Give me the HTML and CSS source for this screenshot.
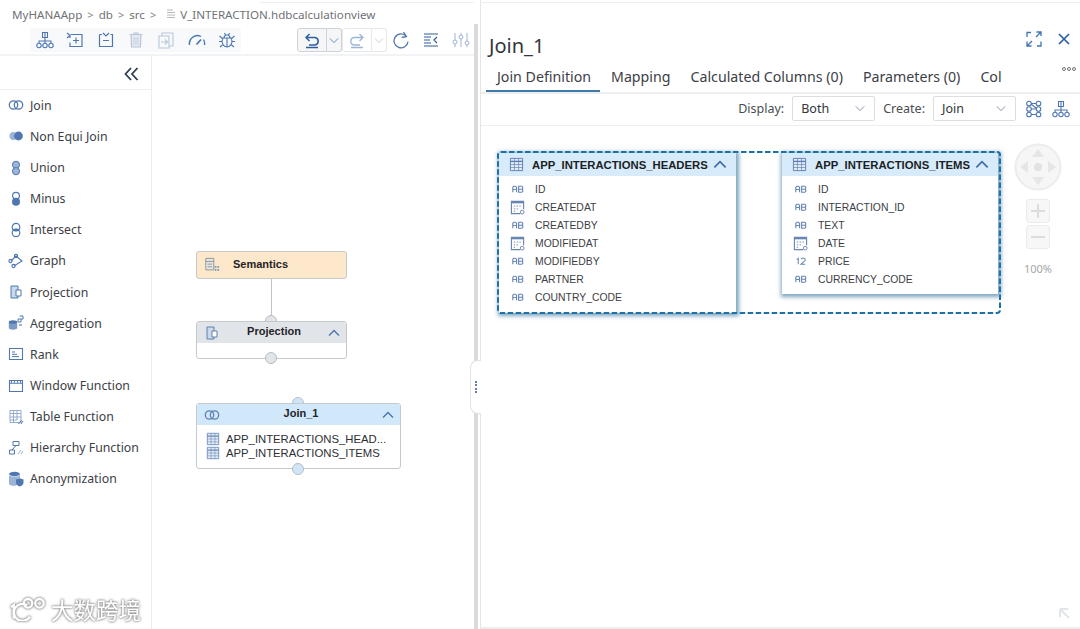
FILE: index.html
```html
<!DOCTYPE html>
<html lang="en">
<head>
<meta charset="utf-8">
<title>V_INTERACTION.hdbcalculationview</title>
<link rel="stylesheet" href="styles.css">
</head>
<body>
<svg class="defs" width="0" height="0" aria-hidden="true">
  <defs>
    <symbol id="i-join" viewBox="0 0 16 16"><g fill="none" stroke="currentColor" stroke-width="1.3"><circle cx="5.5" cy="8" r="4.2"/><circle cx="10.5" cy="8" r="4.2"/></g></symbol>
    <symbol id="i-nonequi" viewBox="0 0 16 16"><circle cx="5.5" cy="8" r="4" fill="#9db4d6"/><circle cx="10.5" cy="8" r="4.4" fill="currentColor"/></symbol>
    <symbol id="i-union" viewBox="0 0 16 16"><circle cx="8" cy="4.8" r="3.6" fill="#9db4d6" stroke="currentColor"/><circle cx="8" cy="11.2" r="3.6" fill="#9db4d6" stroke="currentColor"/></symbol>
    <symbol id="i-minus" viewBox="0 0 16 16"><circle cx="8" cy="4.8" r="3.4" fill="none" stroke="currentColor" stroke-width="1.2"/><circle cx="8" cy="10.8" r="4" fill="currentColor"/></symbol>
    <symbol id="i-intersect" viewBox="0 0 16 16"><g fill="none" stroke="currentColor" stroke-width="1.2"><circle cx="8" cy="5.2" r="3.8"/><circle cx="8" cy="10.8" r="3.8"/></g><path d="M4.8 8h6.4" stroke="currentColor" stroke-width="2.2"/></symbol>
    <symbol id="i-graph" viewBox="0 0 16 16"><g fill="none" stroke="currentColor" stroke-width="1.1"><path d="M3 8 8 3l6 5-8 5"/><circle cx="2.5" cy="8" r="1.6"/><circle cx="8" cy="3" r="1.6"/><circle cx="5.5" cy="13" r="1.6"/></g></symbol>
    <symbol id="i-proj" viewBox="0 0 16 16"><path d="M3 2h7v12H3z" fill="#cbd8ea" stroke="currentColor"/><path d="M8 6h5v6H8z" fill="#fff" stroke="currentColor"/></symbol>
    <symbol id="i-agg" viewBox="0 0 16 16"><ellipse cx="5" cy="7" rx="4.2" ry="1.8" fill="currentColor"/><path d="M.8 7v6c0 2.2 8.4 2.2 8.4 0V7z" fill="currentColor" opacity=".75"/><path d="M10 4h3v3h-3zM11.5 1H15v3h-2" fill="none" stroke="currentColor"/><path d="M11 9h3v2h-3z" fill="#9db4d6"/></symbol>
    <symbol id="i-rank" viewBox="0 0 16 16"><path d="M1.5 2.5h13v11h-13z" fill="none" stroke="currentColor" stroke-width="1.1"/><path d="M4 6h3M4 8.3h5M4 10.6h7" stroke="currentColor"/></symbol>
    <symbol id="i-window" viewBox="0 0 16 16"><path d="M1.5 2.5h13v11h-13zM1.5 5.2h13" fill="none" stroke="currentColor" stroke-width="1.1"/><path d="M3.5 2.5v2.2M6.5 2.5v2.2M9.5 2.5v2.2M12.5 2.5v2.2" stroke="currentColor"/></symbol>
    <symbol id="i-tablefn" viewBox="0 0 16 16"><path d="M2 1.5h11v12H2zM2 4.500h11M2 8h11M2 11h7M5.500 1.500v12M9 1.500V11" fill="none" stroke="#8aa5cb" stroke-width=".9"/><path d="M10.500 15l3-4M13 15l2-3" stroke="currentColor"/></symbol>
    <symbol id="i-hierfn" viewBox="0 0 16 16"><path d="M5 1.500h6v4H5zM1.500 10h5v4h-5zM8 5.500 4 10" fill="none" stroke="currentColor"/><path d="M10 14l3-4M13 14l2-3" stroke="#9db4d6"/></symbol>
    <symbol id="i-anon" viewBox="0 0 16 16"><ellipse cx="6.500" cy="3" rx="5.500" ry="2.200" fill="currentColor"/><path d="M1 4v9c0 2.200 8 2.200 8 1V8l3-1V4c-1 2-10 2-11 0z" fill="#9db4d6"/><path d="M8 8.500l3.800-1.300 3.700 1.300v3c0 2-2 3.500-3.700 4-1.800-.5-3.800-2-3.800-4z" fill="currentColor"/></symbol>
    <symbol id="i-table" viewBox="0 0 16 16"><path d="M1.500 1.500h13v13h-13z" fill="#e4ebf5" stroke="currentColor"/><path d="M1.500 4.700h13" stroke="currentColor" stroke-width="1.500"/><path d="M1.500 8h13M1.500 11.200h13M5.800 1.500v13M10.200 1.500v13" stroke="currentColor" stroke-width=".7"/></symbol>
    <symbol id="i-date" viewBox="0 0 16 17"><path d="M11 15.500H1.500v-13h13V11" fill="none" stroke="currentColor" stroke-width="1.200"/><path d="M1.500 3.500h13" stroke="currentColor" stroke-width="2.200"/><path d="M4 7.500h1.500M7 7.500h1.500M10 7.500h1.500M4 10.500h1.500M7 10.500h1.500M4 13h1.500" stroke="currentColor"/><circle cx="13" cy="14" r="2" fill="#fff" stroke="currentColor"/></symbol>
    <symbol id="i-ab" viewBox="0 0 16 16"><path d="M3 11.500V6.200L4.200 5h1.600L7 6.200v5.300M3 8.500H7M9.200 5h3.400l1 1v1.300l-.8.900.8.900V10.500l-1 1H9.200zM9.200 8.200H12.600" fill="none" stroke="currentColor" stroke-width="1.200"/></symbol>
    <symbol id="i-num" viewBox="0 0 16 16"><path d="M4 6.500l1.600-1.300v6.300M8.500 6l1-1h2.500l1 1v1.300L8.500 11.500H13" fill="none" stroke="currentColor" stroke-width="1.100"/></symbol>
    <symbol id="i-hier" viewBox="0 0 18 18"><g fill="none" stroke="currentColor" stroke-width="1.100"><path d="M6.500 1.500h5v5h-5zM9 1.500v5M9 6.500V10M3 12V10h12v2M9 10v2"/><circle cx="3" cy="14.500" r="2.200"/><circle cx="9" cy="14.500" r="2.200"/><circle cx="15" cy="14.500" r="2.200"/></g></symbol>
    <symbol id="i-add" viewBox="0 0 18 18"><path d="M5 3.500h11v12H4v-4M4 7V3.500M10 6.500v6M7 9.500h6M1 2l3 2.500L1 7" fill="none" stroke="currentColor" stroke-width="1.200"/></symbol>
    <symbol id="i-remove" viewBox="0 0 18 18"><path d="M2.500 3.500v12h13v-12h-2M5 3.500H2.500M6 9.500h6M6 2l3 3 3-3" fill="none" stroke="currentColor" stroke-width="1.200"/></symbol>
    <symbol id="i-trash" viewBox="0 0 18 18"><path d="M2.500 3.500h13M7 3.500V2h4v1.500M4 3.500l.6 12.500h8.800l.6-12.500" fill="#e6ebf3" stroke="currentColor" stroke-width="1.200"/><path d="M7 6v8M11 6v8M9 6v8" stroke="currentColor" stroke-width=".7"/></symbol>
    <symbol id="i-move" viewBox="0 0 18 18"><path d="M5 5V2h11v13h-4M2 5h10v12H2zM4 11h6M8 8.500l2.500 2.500L8 13.500" fill="none" stroke="currentColor" stroke-width="1.100"/></symbol>
    <symbol id="i-gauge" viewBox="0 0 18 18"><path d="M1.500 14A8 8 0 0 1 13 5.500M15.500 8.500a8 8 0 0 1 1 5.500" fill="none" stroke="currentColor" stroke-width="1.400"/><path d="M8.500 13.500 13 8.500" stroke="currentColor" stroke-width="1.800"/></symbol>
    <symbol id="i-bug" viewBox="0 0 18 18"><g fill="none" stroke="currentColor" stroke-width="1.100"><path d="M5 7h8l1 3c0 3-2 6-5 6s-5-3-5-6zM6 7a3 3 0 0 1 6 0M9 7v9M1.500 5 5 8M16.500 5 13 8M1 10.500h3M17 10.500h-3M2 16l3-2.500M16 16l-3-2.500M6.500 2 7.500 4M11.500 2l-1 2"/></g></symbol>
    <symbol id="i-undo" viewBox="0 0 18 18"><path d="M3 6.500h9a3.800 3.800 0 0 1 0 7.500H6M6.500 3 3 6.500 6.500 10M3 16.500h12" fill="none" stroke="currentColor" stroke-width="1.500"/></symbol>
    <symbol id="i-redo" viewBox="0 0 18 18"><path d="M15 6.500H6a3.800 3.800 0 0 0 0 7.500h6M11.500 3 15 6.500 11.500 10M3 16.500h12" fill="none" stroke="currentColor" stroke-width="1.300"/></symbol>
    <symbol id="i-refresh" viewBox="0 0 18 18"><path d="M14.500 5.500a7 7 0 1 0 1.500 5M11.500 1l3 4.500-4.800 1" fill="none" stroke="currentColor" stroke-width="1.300"/></symbol>
    <symbol id="i-layout" viewBox="0 0 18 18"><path d="M2 3h14M2 15h14M2 6h7M2 9h6M2 12h7M15 6l-3 3 3 3" fill="none" stroke="currentColor" stroke-width="1.200"/></symbol>
    <symbol id="i-sliders" viewBox="0 0 18 18"><g fill="none" stroke="currentColor" stroke-width="1"><path d="M3 2v7M3 13v3M9 2v2M9 8v8M15 2v8M15 14v2"/><circle cx="3" cy="11" r="2"/><circle cx="9" cy="6" r="2"/><circle cx="15" cy="12" r="2"/></g></symbol>
    <symbol id="i-chain" viewBox="0 0 18 18"><g fill="none" stroke="currentColor" stroke-width="1.100"><circle cx="4" cy="3.500" r="2.300"/><circle cx="4" cy="9" r="2.300"/><circle cx="4" cy="14.500" r="2.300"/><circle cx="13.500" cy="3.500" r="2.300"/><circle cx="13.500" cy="9" r="2.300"/><circle cx="13.500" cy="14.500" r="2.300"/><path d="M6 3.500h5M6 9h5M6 14.500h5M6 4l5 4"/></g></symbol>
    <symbol id="i-sem" viewBox="0 0 18 18"><path d="M2 1.500h9v13H2zM2 5h9M4 8h5M4 11h5" fill="#e8e6e0" stroke="#8a8f96"/><path d="M12 10h2v2h-2zM15 10h2v2h-2zM12 13.500h2v2h-2zM15 13.500h2v2h-2z" fill="#7f97bb"/></symbol>
    <symbol id="i-chev" viewBox="0 0 12 8"><path d="M1 6.500 6 1.500l5 5" fill="none" stroke="currentColor" stroke-width="1.500"/></symbol>
    <symbol id="i-down" viewBox="0 0 12 8"><path d="M1 1.500 6 6.500l5-5" fill="none" stroke="currentColor" stroke-width="1"/></symbol>
    <symbol id="i-collapse" viewBox="0 0 15 14"><path d="M7 1 1.500 7 7 13M13.500 1 8 7l5.500 6" fill="none" stroke="currentColor" stroke-width="1.800"/></symbol>
  </defs>
</svg>

<div class="app">
  <section class="left">
    <div class="crumb">
      <span>MyHANAApp</span><span class="sep">&gt;</span><span>db</span><span class="sep">&gt;</span><span>src</span><span class="sep">&gt;</span>
      <svg class="doc" viewBox="0 0 10 10"><path d="M1 1h6M1 3.500h8M1 6h8M1 8.500h8" stroke="#b5b8bc" stroke-width="1.200"/></svg>
      <span>V_INTERACTION.hdbcalculationview</span>
    </div>
    <div class="toolbar">
      <div class="tool-group">
        <svg class="ti"><use href="#i-hier"/></svg>
        <svg class="ti"><use href="#i-add"/></svg>
        <svg class="ti"><use href="#i-remove"/></svg>
        <svg class="ti faded"><use href="#i-trash"/></svg>
        <svg class="ti faded"><use href="#i-move"/></svg>
        <svg class="ti"><use href="#i-gauge"/></svg>
        <svg class="ti"><use href="#i-bug"/></svg>
      </div>
      <div class="history">
        <div class="hbtn active wide"><svg class="ti dark"><use href="#i-undo"/></svg></div>
        <div class="hbtn active narrow"><svg class="dn"><use href="#i-down"/></svg></div>
        <div class="hbtn wide"><svg class="ti faded2"><use href="#i-redo"/></svg></div>
        <div class="hbtn narrow"><svg class="dn pale"><use href="#i-down"/></svg></div>
      </div>
      <div class="tool-tail">
        <svg class="ti"><use href="#i-refresh"/></svg>
        <svg class="ti dark"><use href="#i-layout"/></svg>
        <svg class="ti faded2"><use href="#i-sliders"/></svg>
      </div>
    </div>
    <div class="work">
      <aside class="palette">
        <div class="pal-head"><svg class="collapse"><use href="#i-collapse"/></svg></div>
        <ul class="pal-list">
          <li><svg class="pi"><use href="#i-join"/></svg>Join</li>
          <li><svg class="pi"><use href="#i-nonequi"/></svg>Non Equi Join</li>
          <li><svg class="pi"><use href="#i-union"/></svg>Union</li>
          <li><svg class="pi"><use href="#i-minus"/></svg>Minus</li>
          <li><svg class="pi"><use href="#i-intersect"/></svg>Intersect</li>
          <li><svg class="pi"><use href="#i-graph"/></svg>Graph</li>
          <li><svg class="pi"><use href="#i-proj"/></svg>Projection</li>
          <li><svg class="pi"><use href="#i-agg"/></svg>Aggregation</li>
          <li><svg class="pi"><use href="#i-rank"/></svg>Rank</li>
          <li><svg class="pi"><use href="#i-window"/></svg>Window Function</li>
          <li><svg class="pi"><use href="#i-tablefn"/></svg>Table Function</li>
          <li><svg class="pi"><use href="#i-hierfn"/></svg>Hierarchy Function</li>
          <li><svg class="pi"><use href="#i-anon"/></svg>Anonymization</li>
        </ul>
        <div class="mark">
          <svg class="mark-logo" viewBox="0 0 42 24"><g fill="none" stroke="#fff" stroke-width="2.400"><path d="M2 10l3-2v14"/><path d="M19 8a9 9 0 1 0 3 12"/><circle cx="20" cy="6" r="4.500"/><circle cx="32" cy="6" r="4.500"/></g></svg>
          <span class="mark-text">大数跨境</span>
        </div>
      </aside>
      <div class="canvas">
        <div class="link"></div>
        <span class="port p-sem"></span>
        <div class="node n-sem">
          <svg class="ni"><use href="#i-sem"/></svg>
          <b>Semantics</b>
        </div>
        <div class="node n-proj">
          <div class="nhead grey"><svg class="ni"><use href="#i-proj"/></svg><b>Projection</b><svg class="nchev"><use href="#i-chev"/></svg></div>
        </div>
        <span class="port p-proj"></span>
        <span class="port blue p-jtop"></span>
        <div class="node n-join">
          <div class="nhead lblue"><svg class="ni"><use href="#i-join"/></svg><b>Join_1</b><svg class="nchev"><use href="#i-chev"/></svg></div>
          <div class="nrows">
            <div class="nrow"><svg class="nt"><use href="#i-table"/></svg>APP_INTERACTIONS_HEAD...</div>
            <div class="nrow"><svg class="nt"><use href="#i-table"/></svg>APP_INTERACTIONS_ITEMS</div>
          </div>
        </div>
        <span class="port blue p-jbot"></span>
      </div>
    </div>
  </section>

  <div class="split"><div class="bar"></div><div class="grip"><span class="dots"></span></div></div>

  <section class="right">
    <div class="rtop">
      <h1>Join_1</h1>
      <div class="ractions">
        <svg class="expand" viewBox="0 0 16 16"><path d="M1 6V1.500h4M15 5V1h-4.500M15 1l-5 5M1 15l5-5M1 10.500V15h4.500M15 10.500V15h-4" fill="none" stroke="currentColor" stroke-width="1.300"/></svg>
        <svg class="close" viewBox="0 0 12 12"><path d="M1 1l10 10M11 1 1 11" stroke="currentColor" stroke-width="1.700"/></svg>
      </div>
    </div>
    <div class="tabs">
      <span class="tab on">Join Definition</span>
      <span class="tab">Mapping</span>
      <span class="tab">Calculated Columns (0)</span>
      <span class="tab">Parameters (0)</span>
      <span class="tab">Col</span>
      <span class="more"><i></i><i></i><i></i></span>
    </div>
    <div class="filters">
      <label>Display:</label>
      <div class="select"><span>Both</span><svg class="dn"><use href="#i-down"/></svg></div>
      <label>Create:</label>
      <div class="select"><span>Join</span><svg class="dn"><use href="#i-down"/></svg></div>
      <svg class="fi"><use href="#i-chain"/></svg>
      <svg class="fi"><use href="#i-hier"/></svg>
    </div>
    <div class="editor">
      <svg class="selection" viewBox="0 0 504 163"><rect x="1" y="1" width="502" height="161" rx="3"/></svg>
      <div class="tcard t-head">
        <div class="thead"><svg class="tti"><use href="#i-table"/></svg><b>APP_INTERACTIONS_HEADERS</b><svg class="tchev"><use href="#i-chev"/></svg></div>
        <ul class="cols">
          <li><svg class="ci"><use href="#i-ab"/></svg>ID</li>
          <li><svg class="ci"><use href="#i-date"/></svg>CREATEDAT</li>
          <li><svg class="ci"><use href="#i-ab"/></svg>CREATEDBY</li>
          <li><svg class="ci"><use href="#i-date"/></svg>MODIFIEDAT</li>
          <li><svg class="ci"><use href="#i-ab"/></svg>MODIFIEDBY</li>
          <li><svg class="ci"><use href="#i-ab"/></svg>PARTNER</li>
          <li><svg class="ci"><use href="#i-ab"/></svg>COUNTRY_CODE</li>
        </ul>
      </div>
      <div class="tcard t-items">
        <div class="thead"><svg class="tti"><use href="#i-table"/></svg><b>APP_INTERACTIONS_ITEMS</b><svg class="tchev"><use href="#i-chev"/></svg></div>
        <ul class="cols">
          <li><svg class="ci"><use href="#i-ab"/></svg>ID</li>
          <li><svg class="ci"><use href="#i-ab"/></svg>INTERACTION_ID</li>
          <li><svg class="ci"><use href="#i-ab"/></svg>TEXT</li>
          <li><svg class="ci"><use href="#i-date"/></svg>DATE</li>
          <li><svg class="ci"><use href="#i-num"/></svg>PRICE</li>
          <li><svg class="ci"><use href="#i-ab"/></svg>CURRENCY_CODE</li>
        </ul>
      </div>
      <div class="nav">
        <svg class="pad" viewBox="0 0 48 48"><circle cx="24" cy="24" r="22.500" fill="#f6f6f6" stroke="#ececec" stroke-width="2"/><circle cx="24" cy="24" r="4" fill="#e2e2e2"/><path d="M24 6l6 8H18zM24 42l-6-8h12zM6 24l8-6v12zM42 24l-8 6V18z" fill="#e6e6e6"/></svg>
        <div class="zbtn"><svg viewBox="0 0 20 20"><path d="M3 10h14M10 3v14" stroke="#dcdcdc" stroke-width="2"/></svg></div>
        <div class="zbtn"><svg viewBox="0 0 20 20"><path d="M3 10h14" stroke="#dcdcdc" stroke-width="2"/></svg></div>
        <span class="zlabel">100%</span>
      </div>
      <svg class="corner" viewBox="0 0 14 14"><path d="M2 2h8M2 2v8M2 2l9 9" stroke="#e2e6ea" stroke-width="2" fill="none"/></svg>
    </div>
  </section>
</div>
</body>
</html>
```

FILE: styles.css
```css
* { box-sizing: border-box; }
html, body { margin: 0; height: 100%; background: #fff; overflow: hidden; }
body { font-family: "Noto Sans", "Open Sans", sans-serif; color: #32363a; }
.defs { position: absolute; }
ul { list-style: none; margin: 0; padding: 0; }

.app { display: flex; height: 629px; width: 1080px; position: relative; }
.app::before { content: ""; position: absolute; left: 260px; right: 0; top: 2px; height: 1px; background: #eeeff0; }
.left { width: 474px; display: flex; flex-direction: column; flex: none; }

.crumb { height: 28px; padding-left: 12px; display: flex; align-items: center; gap: 5px; font-size: 11.6px; color: #6f7276; white-space: nowrap; }
.crumb .sep { color: #85888c; font-size: 11px; }
.crumb .doc { width: 10px; height: 10px; margin: 0 -1px 0 5px; flex: none; }

.toolbar { height: 28px; display: flex; align-items: flex-start; border-bottom: 2px solid #f2f3f4; }
.tool-group { margin-left: 30px; height: 24px; width: 211px; flex: none; background: #f8f9fa; border-radius: 3px; display: flex; align-items: center; justify-content: space-between; padding: 0 5px 0 6px; }
.ti { width: 18px; height: 18px; color: #4f78b2; flex: none; }
.ti.dark { color: #2f5f9e; }
.ti.faded { color: #b7c6dc; }
.ti.faded2 { color: #9db4d4; }
.history { display: flex; margin-left: 56px; height: 24px; flex: none; }
.hbtn { display: flex; align-items: center; justify-content: center; border: 1px solid #e6e8ea; background: #fff; }
.hbtn.wide { width: 30px; border-radius: 3px 0 0 3px; }
.hbtn.narrow { width: 15px; border-left: 0; border-radius: 0 3px 3px 0; }
.hbtn.active { background: #f5f6f7; border-color: #d0d3d6; }
.dn { width: 10px; height: 7px; color: #4f78b2; }
.dn.pale { color: #c0c8d4; }
.tool-tail { display: flex; gap: 12px; margin-left: 5px; padding-top: 3px; flex: none; }

.work { flex: 1; display: flex; min-height: 0; }
.palette { width: 152px; border-right: 1px solid #eceded; flex: none; position: relative; }
.pal-head { height: 33.7px; border-bottom: 1px solid #eef0f1; display: flex; justify-content: flex-end; align-items: flex-start; padding: 11px 12px 0 0; }
.collapse { width: 15px; height: 14px; color: #2f3d52; }
.pal-list li { height: 31.15px; display: flex; align-items: center; gap: 6px; padding-left: 8px; font-size: 12.3px; color: #3c4046; white-space: nowrap; }
.pi { width: 16px; height: 16px; color: #4f78b2; flex: none; }
.mark { position: absolute; left: 9px; bottom: 8px; display: flex; align-items: center; gap: 2px; filter: drop-shadow(0 0 1px #8f8f8f) drop-shadow(0 0 1px #a8a8a8); }
.mark-logo { width: 40px; height: 24px; }
.mark-text { font-family: "Noto Sans CJK SC", sans-serif; font-size: 22.5px; line-height: 24px; color: #fff; }

.canvas { flex: 1; position: relative; }
.node { position: absolute; border: 1px solid #c6c9cc; border-radius: 3px; background: #fff; font-family: "Liberation Sans", Arial, sans-serif; font-size: 11px; color: #1f2326; }
.node b { flex: 1; text-align: center; font-size: 11px; padding-bottom: 2px; }
.nhead b { padding: 0 0 3px; }
.n-sem { left: 44px; top: 195px; width: 151px; height: 28px; background: #fde8cb; display: flex; align-items: center; padding: 0 45px 0 7px; }
.n-proj { left: 44px; top: 265px; width: 151px; height: 38px; }
.n-join { left: 44px; top: 347px; width: 205px; height: 66px; }
.nhead { height: 21px; display: flex; align-items: center; padding: 0 6px 0 7px; border-radius: 2px 2px 0 0; }
.nhead.grey { background: #e1e5e9; }
.nhead.lblue { background: #d1e8fb; }
.ni { width: 16px; height: 16px; color: #5f80b0; flex: none; }
.nchev { width: 12px; height: 8px; color: #4f78b2; flex: none; }
.nrows { padding: 7px 0 0 9px; }
.nrow { display: flex; align-items: center; gap: 6px; height: 14px; font-size: 11.3px; color: #2c3034; white-space: nowrap; }
.nt { width: 14px; height: 14px; color: #6c8dbb; flex: none; }
.link { position: absolute; left: 119px; top: 223px; width: 1px; height: 40px; background: #bfc3c7; }
.port { position: absolute; width: 12px; height: 12px; border-radius: 50%; background: #e2e5e8; border: 1px solid #b9bdc1; }
.port.blue { background: #cfe5f8; }
.p-sem { left: 113px; top: 259px; }
.p-proj { left: 113px; top: 296px; }
.p-jtop { left: 140px; top: 341px; }
.p-jbot { left: 140px; top: 407px; }

.split { width: 6px; flex: none; position: relative; background: #fff; }
.bar { position: absolute; left: 0; top: 24px; bottom: 0; width: 4px; background: #d9dadb; }
.grip { position: absolute; left: -4px; top: 360px; width: 11px; height: 54px; background: #fff; border: 1px solid #e1e3e5; border-right: 0; border-radius: 8px 0 0 8px; display: flex; align-items: center; justify-content: center; }
.dots { width: 2px; height: 12px; background: repeating-linear-gradient(#5f7fb0 0 2px, transparent 2px 3.3px); }

.right { flex: 1; display: flex; flex-direction: column; min-width: 0; border-left: 1px solid #e4e5e6; border-bottom: 2px solid #eceded; }
.rtop { height: 58px; padding: 20px 7px 0 8px; display: flex; justify-content: space-between; flex: none; }
.rtop h1 { margin: 14px 0 0; font-size: 20px; line-height: 24px; font-weight: 400; color: #32363a; }
.ractions { display: flex; gap: 16px; align-items: flex-start; padding-top: 11px; color: #2b5fa0; }
.expand { width: 16px; height: 16px; color: #3f74b4; }
.close { width: 12px; height: 12px; margin: 2px 3px 0 0; }
.tabs { height: 34px; display: flex; align-items: flex-end; padding-left: 5px; flex: none; }
.tab { font-size: 14.2px; line-height: 19px; color: #3c4046; padding: 0 9px 4px 11px; white-space: nowrap; border-bottom: 2px solid transparent; }
.tab.on { border-bottom-color: #3f7aa8; }
.more { margin-left: auto; margin-right: 4px; display: flex; gap: 1px; align-self: flex-start; margin-top: 9px; }
.more i { width: 4px; height: 4px; border: 1px solid #6f7276; border-radius: 50%; }

.filters { height: 34px; flex: none; display: flex; align-items: center; gap: 8px; justify-content: flex-end; padding: 0 10px 2px 0; border-top: 2px solid #eceeef; border-bottom: 1px solid #eceeef; font-size: 12.5px; color: #4a4e52; }
.select { width: 83px; height: 25px; border: 1px solid #dcdee0; border-radius: 2px; display: flex; align-items: center; justify-content: space-between; padding: 0 9px 0 8px; color: #32363a; }
.select .dn { color: #6f7d90; }
.fi { width: 18px; height: 18px; color: #4f78b2; margin-left: 1px; }

.editor { flex: 1; position: relative; }
.selection { position: absolute; left: 16px; top: 25px; width: 504px; height: 163px; z-index: 2; pointer-events: none; }
.selection rect { fill: none; stroke: #1a72a6; stroke-width: 2; stroke-dasharray: 5.5 2.5; }
.tcard { position: absolute; background: #fff; box-shadow: 1px 1px 4px 2px rgba(40, 105, 150, .6); font-family: "Liberation Sans", Arial, sans-serif; }
.t-head { left: 18px; top: 27px; width: 237px; height: 160px; }
.t-items { left: 301px; top: 27px; width: 216px; height: 141px; }
.thead { height: 23px; background: #d8ebfb; display: flex; align-items: center; padding: 0 10px; color: #1b1f23; }
.thead b { flex: 1; padding-left: 8px; white-space: nowrap; font-size: 11.3px; }
.tti { width: 15px; height: 15px; color: #5d80b4; flex: none; }
.tchev { width: 14px; height: 9px; color: #3e6aa5; flex: none; margin-right: -1px; }
.cols { padding-top: 4px; }
.cols li { height: 18px; display: flex; align-items: center; gap: 10px; padding-left: 11px; font-size: 10.4px; color: #3c4044; }
.ci { width: 15px; height: 16px; color: #6786b4; flex: none; }
.nav { position: absolute; left: 533px; top: 17px; width: 48px; display: flex; flex-direction: column; align-items: center; }
.pad { width: 48px; height: 48px; }
.zbtn { width: 24px; height: 24px; margin-top: 2px; border: 1px solid #ebebeb; border-radius: 3px; background: #f7f7f7; display: flex; align-items: center; justify-content: center; }
.nav .pad + .zbtn { margin-top: 8px; }
.zbtn svg { width: 20px; height: 20px; }
.zlabel { margin-top: 12px; font-size: 11px; color: #a4a6a8; }
.corner { position: absolute; right: 8px; bottom: 6px; width: 14px; height: 14px; }
```
